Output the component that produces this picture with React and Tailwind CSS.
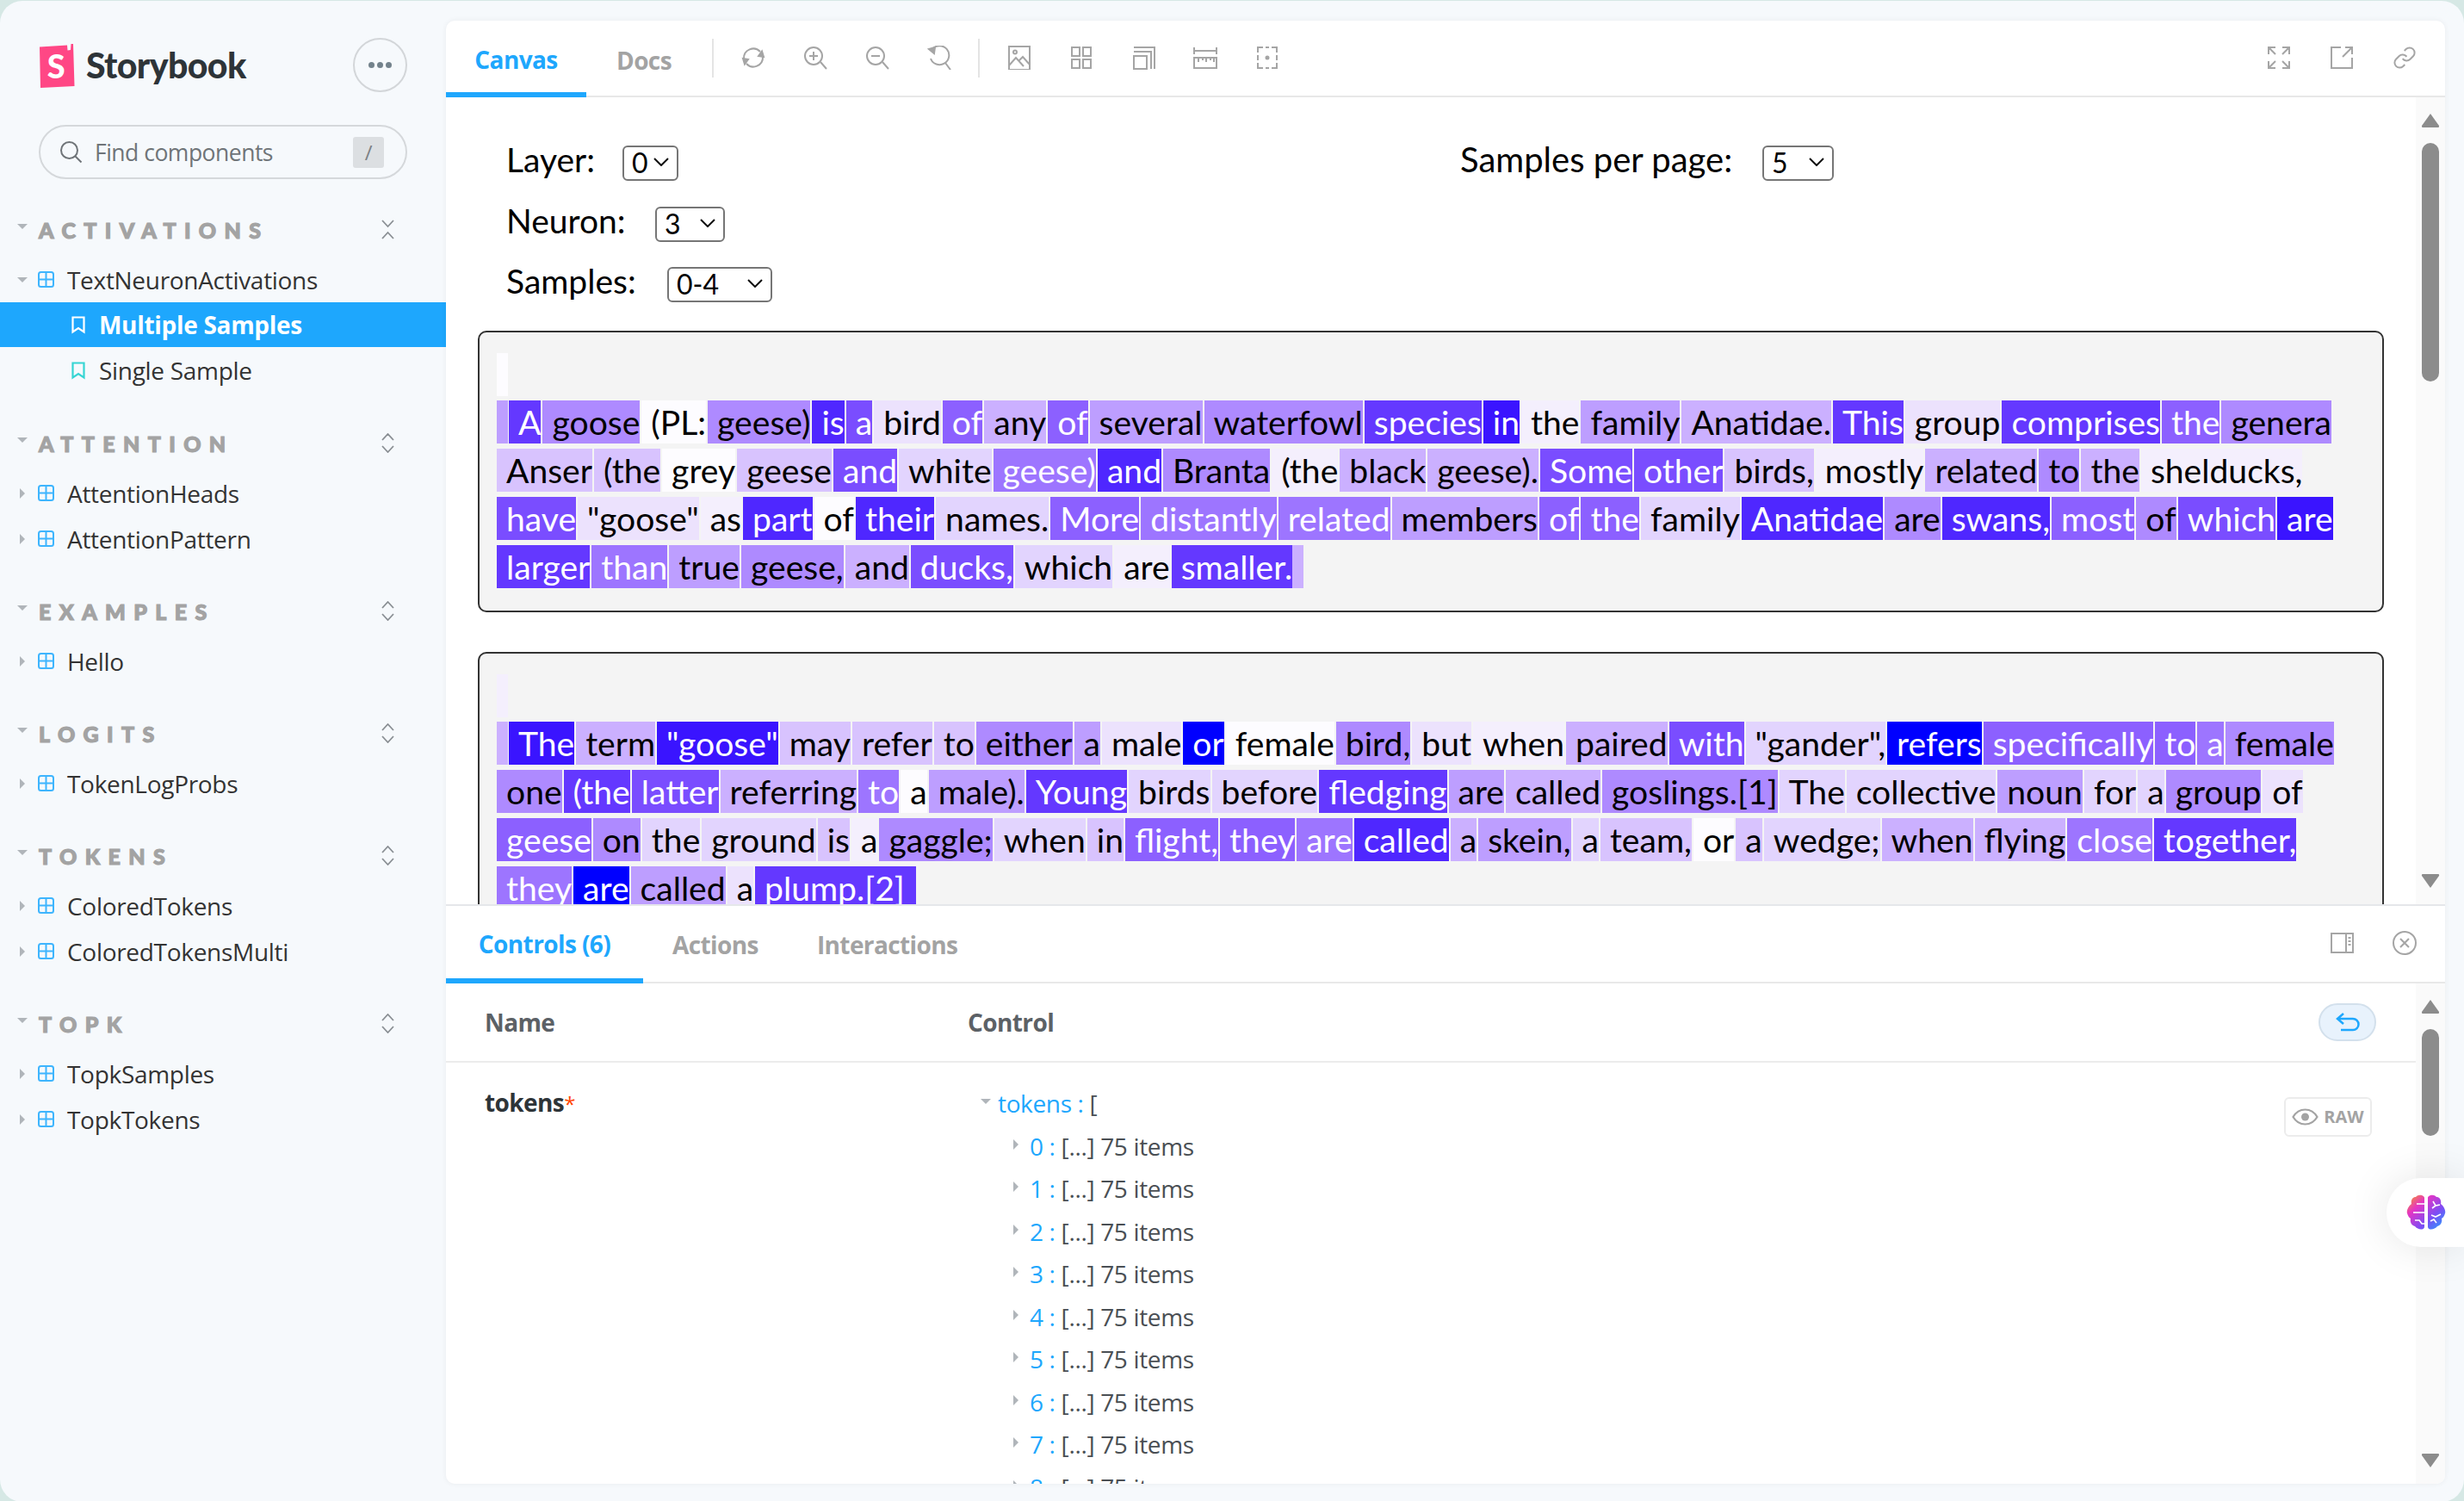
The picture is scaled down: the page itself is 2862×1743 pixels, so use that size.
import { Fragment } from 'react';

// activation colour scale, a = none ... o = strongest
const LEVELS = {
  a: '#fdfcff', b: '#f4effd', c: '#ece2fd', d: '#e2d4fe', e: '#d8c3fe',
  f: '#cbb0ff', g: '#bd9eff', h: '#ae8aff', i: '#9d75ff', j: '#8c60ff',
  k: '#7a4dff', l: '#6438ff', m: '#4f27ff', n: '#3a14ff', o: '#0000ff',
};

const SAMPLE_ONE = [
  'A:l goose:h (PL::a geese):h is:m a:k bird:c of:j any:f of:j several:g waterfowl:h species:l in:n the:b family:g Anatidae.:f This:l group:c comprises:l the:j genera:h',
  'Anser:e (the:e grey:a geese:e and:k white:d geese):i and:m Branta:h (the:b black:f geese).:f Some:k other:k birds,:e mostly:b related:f to:h the:f shelducks,:b',
  'have:k "goose":c as:b part:m of:a their:m names.:d More:j distantly:i related:i members:g of:j the:j family:d Anatidae:m are:h swans,:m most:j of:h which:k are:n',
  'larger:l than:i true:g geese,:h and:f ducks,:k which:d are:b smaller.:l',
];

const SAMPLE_TWO = [
  'The:n term:f "goose":n may:e refer:e to:e either:h a:g male:c or:o female:a bird,:h but:c when:b paired:f with:k "gander",:d refers:o specifically:j to:j a:i female:h',
  'one:h (the:l latter:k referring:f to:i a:a male).:g Young:l birds:d before:d fledging:l are:g called:f goslings.[1]:h The:d collective:d noun:g for:d a:d group:h of:c',
  'geese:j on:h the:d ground:d is:e a:b gaggle;:h when:d in:e flight,:j they:j are:i called:m a:f skein,:g a:d team,:e or:a a:e wedge;:d when:f flying:f close:i together,:l',
  'they:i are:o called:g a:c plump.[2]:l',
];

const SECTIONS = [
  { title: 'ACTIVATIONS', open: true, items: ['TextNeuronActivations'] },
  { title: 'ATTENTION', items: ['AttentionHeads', 'AttentionPattern'] },
  { title: 'EXAMPLES', items: ['Hello'] },
  { title: 'LOGITS', items: ['TokenLogProbs'] },
  { title: 'TOKENS', items: ['ColoredTokens', 'ColoredTokensMulti'] },
  { title: 'TOPK', items: ['TopkSamples', 'TopkTokens'] },
];

function Ico({ size = 28, className = 'text-[#a5a5a5]', width = 2, children }) {
  return (
    <svg width={size} height={size} viewBox="0 0 28 28" fill="none" stroke="currentColor" strokeWidth={width} className={className}>
      {children}
    </svg>
  );
}

const TOOL_ICONS = [
  <><path d="M3 15a11 11 0 0 1 19-8" /><path d="M25 13a11 11 0 0 1-19 8" /><path d="M20 12l4-5.500L26 13z" fill="currentColor" /><path d="M8 16l-4 5.500L2 15z" fill="currentColor" /></>,
  <><circle cx="12" cy="12" r="10" /><path d="M20 19l7 8M12 7v10M7 12h10" /></>,
  <><circle cx="12" cy="12" r="10" /><path d="M20 19l7 8M7 12h10" /></>,
  <><path d="M6 4a11 11 0 1 1-2 11" /><path d="M21 20l6 8" /><path d="M2 4l7-2-1 7z" fill="currentColor" /></>,
];

const TOOL_ICONS_2 = [
  <><rect x="2" y="1" width="24" height="27" /><circle cx="9" cy="7.500" r="2" width="1.500" /><path d="M2 23l8-9 9 10M14 17l4-4 8 9" /></>,
  <><rect x="3" y="2" width="9" height="10" /><rect x="16" y="2" width="9" height="10" /><rect x="3" y="16" width="9" height="10" /><rect x="16" y="16" width="9" height="10" /></>,
  <><rect x="3" y="12" width="15" height="15" /><path d="M3 7h20v20M3 2h24v25" /></>,
  <><path d="M1 2v8M27 2v8M1 6h26" /><rect x="1" y="14" width="26" height="12" /><path d="M6 14v5M11 14v3M15 14v5M20 14v3M24 14v5" width="1.500" /></>,
  <><path d="M3 8V2h6M19 2h6v6M25 20v6h-6M9 26H3v-6M3 11v6M25 11v6M12 2h4M12 26h4" /><circle cx="14" cy="14" r="1.500" fill="currentColor" /></>,
];

function Caret({ open }) {
  return (
    <svg width="12" height="12" viewBox="0 0 12 12" className="text-[#b0b5ba]" fill="currentColor">
      {open ? <path d="M0 3h12L6 9z" /> : <path d="M3 0l6 6-6 6z" />}
    </svg>
  );
}

function GridIcon({ className = 'text-[#3eb5fe]' }) {
  return (
    <svg width="19" height="19" viewBox="0 0 19 19" fill="none" stroke="currentColor" strokeWidth="2" className={className}>
      <rect x="1" y="1" width="17" height="17" rx="2.500" />
      <path d="M9.500 1v17M1 9.500h17" />
    </svg>
  );
}

function Bookmark({ className }) {
  return (
    <svg width="16" height="21" viewBox="0 0 16 21" fill="none" stroke="currentColor" strokeWidth="2.200" className={className}>
      <path d="M1.500 1.500h13v17L8 14l-6.500 4.500z" />
    </svg>
  );
}

function Logo() {
  return (
    <svg width="42" height="52" viewBox="0 0 42 52">
      <path d="M1 4.500L33 2.500l.5 6 3.500-.5.500-7L40 1l1.500 49L2 52z" fill="#ff4785" />
      <text x="20" y="41" textAnchor="middle" fontSize="38" fontWeight="900" fill="#fff" fontFamily="Lato, sans-serif">S</text>
    </svg>
  );
}

function SectionHeader({ title, open }) {
  return (
    <div className="h-[60px] flex items-center pl-[20px] pr-[60px]">
      <div className="w-[25px] -mt-[10px]"><Caret open /></div>
      <span className="font-black text-[25px] tracking-[9.400px] text-[#a3a3a3] [-webkit-text-stroke:1.200px_#a3a3a3] font-['Lato',sans-serif]">{title}</span>
      <div className="ml-auto -mt-[4px]">
        <svg width="15" height="23" viewBox="0 0 15 23" fill="none" stroke="#8a8f94" strokeWidth="1.800">
          {open ? <path d="M1 1l6.500 7L14 1M1 22l6.500-7 6.500 7" /> : <path d="M1 8l6.500-7L14 8M1 15l6.500 7 6.500-7" />}
        </svg>
      </div>
    </div>
  );
}

function TreeItem({ label }) {
  return (
    <div className="h-[53px] flex items-center pl-[20px] text-[#333333]">
      <div className="w-[24px] flex"><Caret /></div>
      <GridIcon />
      <span className="ml-[15px]">{label}</span>
    </div>
  );
}

function Sidebar() {
  return (
    <aside className="w-[518px] shrink-0 text-[28px] font-['Open_Sans',sans-serif] tracking-[-0.3px]">
      <div className="flex items-center pl-[45px] pr-[45px] pt-[43px]">
        <Logo />
        <span className="ml-[13px] text-[41px] font-black tracking-[-0.6px] text-[#2e3438] font-['Lato',sans-serif]">Storybook</span>
        <div className="ml-auto w-[63px] h-[63px] rounded-full border-2 border-[#d3d6d9] flex items-center justify-center gap-[3px]">
          <span className="w-[7px] h-[7px] rounded-full bg-[#73828c]" />
          <span className="w-[7px] h-[7px] rounded-full bg-[#73828c]" />
          <span className="w-[7px] h-[7px] rounded-full bg-[#73828c]" />
        </div>
      </div>

      <div className="mx-[45px] mt-[38px] h-[63px] rounded-full border-2 border-[#d5d8db] flex items-center pl-[22px] pr-[25px] text-[#6f7478]">
        <svg width="27" height="27" viewBox="0 0 27 27" fill="none" stroke="#6f7478" strokeWidth="2">
          <circle cx="11.500" cy="11.500" r="9.500" />
          <path d="M18.500 18.500l7 7" />
        </svg>
        <span className="ml-[14px] text-[26.500px] tracking-[-0.5px] pt-[2px]">Find components</span>
        <div className="ml-auto w-[36px] h-[36px] rounded-[3px] bg-[#dcdfe2] flex items-center justify-center text-[24px] text-[#7d8185]">/</div>
      </div>

      <nav className="mt-[30px]">
        {SECTIONS.map((section) => (
          <div key={section.title} className="mb-[29px]">
            <SectionHeader title={section.title} open={section.open} />
            {section.open ? (
              <>
                <div className="h-[53px] flex items-center pl-[20px] text-[#333333]">
                  <div className="w-[24px] flex"><Caret open /></div>
                  <GridIcon />
                  <span className="ml-[15px]">{section.items[0]}</span>
                </div>
                <div className="h-[52px] bg-[#1ea7fd] flex items-center pl-[83px] text-white font-bold">
                  <Bookmark className="text-white" />
                  <span className="ml-[16px]">Multiple Samples</span>
                </div>
                <div className="h-[54px] flex items-center pl-[83px] text-[#333333]">
                  <Bookmark className="text-[#37d5d3]" />
                  <span className="ml-[16px]">Single Sample</span>
                </div>
              </>
            ) : (
              section.items.map((item) => <TreeItem key={item} label={item} />)
            )}
          </div>
        ))}
      </nav>
    </aside>
  );
}

function Toolbar() {
  return (
    <div className="h-[89px] shrink-0 flex border-b-2 border-[#e8e8e8] text-[28px] font-bold font-['Open_Sans',sans-serif] tracking-[-0.6px]">
      <div className="w-[163px] h-[89px] border-b-[6px] border-[#1ea7fd] text-[#1ea7fd] flex items-center justify-center pt-[6px]">Canvas</div>
      <div className="w-[136px] flex items-center justify-center text-[#a3a3a3] pt-[4px] -ml-[1px]">Docs</div>
      <div className="w-[2px] h-[45px] mt-[21px] bg-[#e4e4e4] ml-[11px]" />
      <div className="flex items-center gap-[44px] ml-[32px] -mt-[1px]">
        {TOOL_ICONS.map((icon, i) => <Ico key={i}>{icon}</Ico>)}
      </div>
      <div className="w-[2px] h-[45px] mt-[21px] bg-[#e4e4e4] ml-[31px]" />
      <div className="flex items-center gap-[44px] ml-[32px] -mt-[1px]">
        {TOOL_ICONS_2.map((icon, i) => <Ico key={i}>{icon}</Ico>)}
      </div>
      <div className="ml-auto flex items-center gap-[45px] pr-[33px] -mt-[2px]">
        <Ico>
          <path d="M2 10V2h8M18 2h8v8M26 18v8h-8M10 26H2v-8M3 3l7 7M25 3l-7 7M25 25l-7-7M3 25l7-7" />
        </Ico>
        <Ico>
          <path d="M13 2H2v24h24V14M26 2l-11 11M18 2h8v8" />
        </Ico>
        <svg width="28" height="28" viewBox="0 0 24 24" fill="none" stroke="#a5a5a5" strokeWidth="1.700">
          <path d="M10 13a5 5 0 0 0 7.540.540l3-3a5 5 0 0 0-7.070-7.070l-1.720 1.710" />
          <path d="M14 11a5 5 0 0 0-7.540-.540l-3 3a5 5 0 0 0 7.070 7.070l1.710-1.710" />
        </svg>
      </div>
    </div>
  );
}

function Select({ value, className }) {
  return (
    <div className={`relative h-[41px] ${className}`}>
      <select defaultValue={value} className="appearance-none w-full h-full border-2 border-[#767676] rounded-[6px] bg-white pl-[9px] text-[32px] leading-none text-black outline-none">
        <option>{value}</option>
      </select>
      <svg width="18" height="10" viewBox="0 0 18 10" fill="none" stroke="#111" strokeWidth="2" className="absolute right-[11px] top-[16px] pointer-events-none">
        <path d="M1 1l8 8 8-8" />
      </svg>
    </div>
  );
}

function Token({ text, level }) {
  const dark = 'ijklmno'.includes(level);
  return (
    <span
      className={`h-[50px] mr-[2px] pl-[11px] pb-[1px] flex items-center whitespace-pre ${dark ? 'text-white' : 'text-black'}`}
      style={{ backgroundColor: LEVELS[level] }}
    >
      {text}
    </span>
  );
}

function TokenBox({ rows, first, lead, tail, className = 'h-[327px]' }) {
  return (
    <div className={`mx-[37px] shrink-0 border-2 border-[#333333] rounded-[10px] bg-[#f4f4f4] pl-[20px] pt-[24px] text-[39.100px] leading-none font-['Lato',sans-serif] ${className}`}>
      <div className="w-[13px] h-[50px] mb-[5px]" style={{ backgroundColor: LEVELS[first] }} />
      {rows.map((row, i) => (
        <div key={i} className="flex h-[50px] mb-[6px] w-max">
          {i === 0 && <span className="w-[13px] mr-[1px]" style={{ backgroundColor: LEVELS[lead] }} />}
          {row.split(' ').map((entry, j) => {
            const cut = entry.lastIndexOf(':');
            return <Token key={j} text={entry.slice(0, cut)} level={entry.slice(cut + 1)} />;
          })}
          {i === rows.length - 1 && <span className="w-[13px] -ml-[2px]" style={{ backgroundColor: LEVELS[tail] }} />}
        </div>
      ))}
    </div>
  );
}

function ScrollGutter({ thumb, bottom }) {
  return (
    <div className="w-[34px] shrink-0 bg-[#fafafa] flex flex-col items-center">
      <svg width="22" height="18" viewBox="0 0 22 18" className="mt-[18px] shrink-0" fill="#8c8c8c">
        <path d="M11 1l10 14q.5 2-1 2H2q-1.500 0-1-2z" />
      </svg>
      <div className={`w-[20px] rounded-full bg-[#8c8c8c] ${thumb}`} />
      <svg width="22" height="18" viewBox="0 0 22 18" className={`mt-auto shrink-0 ${bottom}`} fill="#8c8c8c">
        <path d="M11 17L1 3q-.5-2 1-2h18q1.500 0 1 2z" />
      </svg>
    </div>
  );
}

function Preview() {
  return (
    <div className="h-[937px] shrink-0 flex overflow-hidden">
      <div className="flex-1 min-w-0 flex flex-col overflow-hidden text-[39px] leading-none font-['Lato',sans-serif] text-black">
        <div className="pl-[70px] pt-[54px] h-[271px] shrink-0 flex">
          <div className="w-[1108px]">
            <div className="flex items-center h-[41px]">
              <span className="w-[135px] -mt-[5px]">Layer:</span>
              <Select value="0" className="w-[65px]" />
            </div>
            <div className="flex items-center h-[41px] mt-[30px]">
              <span className="w-[173px] -mt-[5px]">Neuron:</span>
              <Select value="3" className="w-[81px]" />
            </div>
            <div className="flex items-center h-[41px] mt-[29px]">
              <span className="w-[187px] -mt-[5px]">Samples:</span>
              <Select value="0-4" className="w-[122px]" />
            </div>
          </div>
          <div className="flex items-center h-[41px]">
            <span className="w-[351px] -mt-[5px] text-[40px]">Samples per page:</span>
            <Select value="5" className="w-[83px]" />
          </div>
        </div>
        <TokenBox rows={SAMPLE_ONE} first="a" lead="g" tail="f" />
        <div className="h-[46px] shrink-0" />
        <TokenBox rows={SAMPLE_TWO} first="b" lead="f" tail="l" className="h-[400px]" />
      </div>
      <ScrollGutter thumb="h-[277px] mt-[17px]" bottom="mb-[18px]" />
    </div>
  );
}

function Panel() {
  return (
    <div className="flex-1 min-h-0 flex flex-col border-t-2 border-[#e5e7ea] font-['Open_Sans',sans-serif] tracking-[-0.6px] text-[28px]">
      <div className="h-[90px] shrink-0 flex border-b-2 border-[#e8e8e8] font-bold text-[#a3a3a3]">
        <div className="w-[229px] h-[90px] border-b-[6px] border-[#1ea7fd] text-[#1ea7fd] flex items-center justify-center pt-[4px]">Controls (6)</div>
        <div className="ml-[34px] flex items-center pt-[2px]">Actions</div>
        <div className="ml-[68px] flex items-center pt-[2px]">Interactions</div>
        <div className="ml-auto flex items-center gap-[45px] pr-[33px] -mt-[2px]">
          <Ico>
            <rect x="2" y="3" width="25" height="22" />
            <path d="M19 3v22" />
            <path d="M21.500 8h3M21.500 12h3M21.500 16h3" width="1.500" />
          </Ico>
          <Ico width={2}>
            <circle cx="14" cy="14" r="13" />
            <path d="M9 9l10 10M19 9L9 19" />
          </Ico>
        </div>
      </div>
      <div className="flex-1 min-h-0 flex overflow-hidden">
        <div className="flex-1 min-w-0 overflow-hidden">
          <div className="h-[92px] flex items-center border-b-2 border-[#ececec] pl-[45px] pr-[46px] font-bold text-[#5c6166]">
            <span className="w-[561px]">Name</span>
            <span>Control</span>
            <div className="ml-auto w-[67px] h-[44px] rounded-full bg-[#e8f2fc] border-2 border-[#d3e0ec] flex items-center justify-center">
              <svg width="28" height="24" viewBox="0 0 28 24" fill="none" stroke="#1ea7fd" strokeWidth="2.500">
                <path d="M9 2L2 8l7 6M2 8h18a5.500 5.500 0 0 1 0 13H6" />
              </svg>
            </div>
          </div>
          <div className="flex pl-[45px] pr-[51px] pt-[22px]">
            <div className="w-[561px] font-bold text-[#2e3438] pt-[3px] h-[50px]">
              tokens<span className="text-[#ff4400] font-normal text-[24px]">*</span>
            </div>
            <div className="flex-1 text-[#4a4f54] tracking-[-0.35px]">
              <div className="h-[50px] flex items-center pl-[15px]">
                <div className="w-[20px] -mt-[4px] flex"><Caret open /></div>
                <span className="text-[#1ea7fd]">tokens :</span>
                <span className="ml-[7px]">[</span>
              </div>
              {['0', '1', '2', '3', '4', '5', '6', '7', '8'].map((n) => (
                <Fragment key={n}>
                  <div className="h-[49.500px] flex items-center pl-[50px]">
                    <div className="w-[22px] -mt-[4px] flex"><Caret /></div>
                    <span className="text-[#1ea7fd]">{n} :</span>
                    <span className="ml-[7px]">[...] 75 items</span>
                  </div>
                </Fragment>
              ))}
            </div>
            <div className="w-[102px] h-[46px] mt-[18px] rounded-[6px] border-2 border-[#ececec] flex items-center justify-center gap-[6px] text-[20px] font-bold text-[#a3a3a3] tracking-normal shrink-0">
              <svg width="31" height="20" viewBox="0 0 31 20" fill="none" stroke="#a3a3a3" strokeWidth="2.200">
                <path d="M1.500 10C5 4 10 1.500 15.500 1.500S26 4 29.500 10C26 16 21 18.500 15.500 18.500S5 16 1.500 10z" />
                <circle cx="15.500" cy="10" r="4.500" fill="#a3a3a3" stroke="none" />
              </svg>
              RAW
            </div>
          </div>
        </div>
        <ScrollGutter thumb="h-[124px] mt-[17px]" bottom="mb-[18px]" />
      </div>
    </div>
  );
}

function BrainFab() {
  return (
    <div className="absolute right-0 top-[1368px] w-[90px] h-[80px] rounded-l-[40px] bg-white shadow-[0_0_50px_rgba(0,0,0,0.10)] flex items-center pl-[23px]">
      <svg width="46" height="42" viewBox="0 0 46 42">
        <defs>
          <linearGradient id="brainFill" x1="0" y1="0" x2="1" y2="1">
            <stop offset="0" stopColor="#f9a01b" />
            <stop offset="0.3" stopColor="#e535c4" />
            <stop offset="0.65" stopColor="#7c4df5" />
            <stop offset="1" stopColor="#1ea7fd" />
          </linearGradient>
        </defs>
        <path fill="url(#brainFill)" d="M21 4c0-3-7-5-10-1-4 0-6 4-5 8-4 3-6 8-5 11 1 3 2 5 4 6-1 4 1 8 5 9 3 4 10 5 11 1zM25 4c0-3 7-5 10-1 4 0 6 4 5 8 4 3 6 8 5 11-1 3-2 5-4 6 1 4-1 8-5 9-3 4-10 5-11 1z" />
        <path fill="none" stroke="#fff" strokeWidth="1.600" d="M8 21h13M12 11h9M10 30h5l3 4h3M31 8l3 5 5-1M34 13l-4 3M40 23l-6 3-5-2M35 33l-3-4-4 2" />
      </svg>
    </div>
  );
}

export default function App() {
  return (
    <div className="relative w-[2862px] h-[1743px] overflow-hidden bg-[#d6e8e5]">
      <div className="w-full h-full mt-px rounded-[26px] bg-[#f6f9fc] flex pr-[22px]">
        <Sidebar />
        <main className="flex-1 min-w-0 mt-[23px] h-[1699px] rounded-[10px] bg-white shadow-[0_0_6px_rgba(0,0,0,0.06)] flex flex-col overflow-hidden">
          <Toolbar />
          <Preview />
          <Panel />
        </main>
      </div>
      <BrainFab />
    </div>
  );
}
